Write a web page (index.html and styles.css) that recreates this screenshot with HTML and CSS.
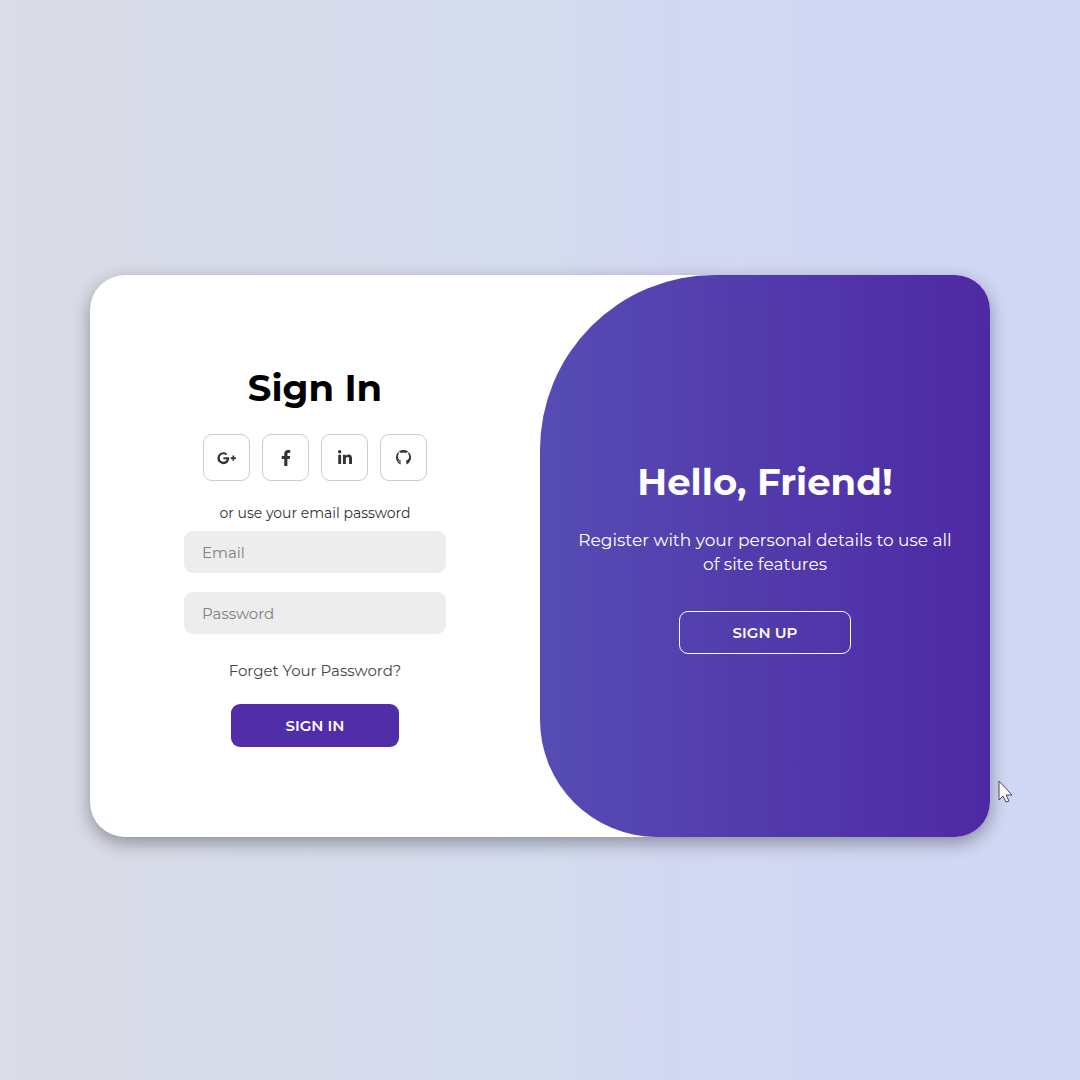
FILE: index.html
```html
<!DOCTYPE html>
<html lang="en">
<head>
    <meta charset="UTF-8">
    <meta name="viewport" content="width=device-width, initial-scale=1.0">
    <title>Sign In</title>
    <link rel="stylesheet" href="styles.css">
</head>
<body>
    <main class="container">
        <form class="sign-in">
            <h1>Sign In</h1>
            <div class="social-icons">
                <a href="#" class="icon" aria-label="Google Plus">
                    <svg width="20" height="16" viewBox="0 0 640 512"><path d="M386 228c2 11 3 22 3 36 0 110-74 188-185 188a192 192 0 1 1 0-384c52 0 95 19 129 50l-53 51c-14-14-39-30-76-30-65 0-118 54-118 120s53 120 118 120c75 0 103-54 108-82H204v-69h182zm164 6v-56h-55v56h-56v56h56v56h55v-56h56v-56h-56z"/></svg>
                </a>
                <a href="#" class="icon" aria-label="Facebook">
                    <svg width="10" height="16" viewBox="0 0 320 512"><path d="M279 288l14-93h-89v-60c0-25 12-50 52-50h41V7s-37-7-72-7c-73 0-121 44-121 125v70H23v93h81v224h100V288z"/></svg>
                </a>
                <a href="#" class="icon" aria-label="LinkedIn">
                    <svg width="14" height="16" viewBox="0 0 448 512"><path d="M100 448H7V149h93v299zM54 108a54 54 0 1 1 0-108 54 54 0 0 1 0 108zM448 448h-93V302c0-34-1-79-48-79-49 0-56 38-56 77v148h-93V149h89v41h1c13-24 43-48 88-48 94 0 112 62 112 142v164z"/></svg>
                </a>
                <a href="#" class="icon" aria-label="GitHub">
                    <svg width="15" height="15" viewBox="0 0 16 16"><path d="M5 15.400A8 8 0 1 1 11 15.400V13c0-.7-.2-1.200-.5-1.600 2.200-.5 3.500-1.800 3.500-4.200 0-1.100-.3-1.900-.9-2.600.2-.8.200-1.600-.1-2.400-.9 0-1.800.5-2.500 1a8 8 0 0 0-5 0c-.7-.5-1.600-1-2.500-1-.3.800-.3 1.600-.1 2.400-.6.700-.9 1.500-.9 2.600 0 2.400 1.300 3.700 3.500 4.200-.2.200-.4.600-.5 1-1.100.3-1.600-.4-2-1-.3-.4-.7-.6-1.200-.5.900.5 1.100 2.700 3.200 2.400z"/></svg>
                </a>
            </div>
            <span class="hint">or use your email password</span>
            <input type="email" placeholder="Email" aria-label="Email">
            <input type="password" placeholder="Password" aria-label="Password">
            <a href="#" class="forgot">Forget Your Password?</a>
            <button type="submit" class="btn">Sign In</button>
        </form>

        <section class="toggle-panel">
            <h1>Hello, Friend!</h1>
            <p>Register with your personal details to use all of site features</p>
            <button type="button" class="btn btn-outline">Sign Up</button>
        </section>

        <svg class="cursor" width="15" height="23" viewBox="0 0 15 23" aria-hidden="true"><path d="M1 1v19l4-4 3 6 3-1-3-6h6z"/></svg>
    </main>
</body>
</html>
```

FILE: styles.css
```css
* {
    margin: 0;
    padding: 0;
    box-sizing: border-box;
    font-family: Montserrat, Inter, sans-serif;
}

body {
    display: flex;
    align-items: center;
    justify-content: center;
    min-height: 100vh;
    padding: 32px 90px 0;
    background: linear-gradient(to right, #dadce6, #d4dcee 50%, #d3d8f2 62%, #d0d7f5);
}

.container {
    position: relative;
    display: grid;
    grid-template-columns: 1fr 1fr;
    width: 100%;
    max-width: 900px;
    min-height: 562px;
    background: #fff;
    border-radius: 35px;
    box-shadow: 0 6px 18px rgba(0, 0, 0, 0.35);
}

.sign-in,
.toggle-panel {
    display: flex;
    flex-direction: column;
    align-items: center;
    justify-content: center;
    text-align: center;
}

.sign-in {
    padding: 0 32px;
}

h1 {
    font-size: 37px;
    line-height: 46px;
    font-weight: 700;
}

.social-icons {
    display: flex;
    gap: 12px;
    margin: 23px 0;
}

.icon {
    display: flex;
    align-items: center;
    justify-content: center;
    width: 47px;
    height: 47px;
    border: 1px solid #ccc;
    border-radius: 9px;
}

.icon svg {
    fill: #333;
}

.hint {
    margin-bottom: 9px;
    font-size: 14px;
    line-height: 18px;
    color: #333;
}

.sign-in input {
    width: 100%;
    max-width: 262px;
    height: 42px;
    margin-bottom: 19px;
    padding: 0 18px;
    border: none;
    border-radius: 9px;
    outline: none;
    background: #ededed;
    font-size: 15px;
}

.sign-in input::placeholder {
    color: #808080;
}

.forgot {
    margin: 8px 0 23px;
    font-size: 15px;
    line-height: 20px;
    color: #444;
    text-decoration: none;
}

.btn {
    height: 43px;
    padding: 0 53px;
    border: 1px solid transparent;
    border-radius: 9px;
    background: #512da8;
    color: #fff;
    font-size: 15px;
    font-weight: 600;
    text-transform: uppercase;
    cursor: pointer;
}

.toggle-panel {
    padding: 0 35px;
    border-radius: 175px 35px 35px 117px;
    background: linear-gradient(to right, #564cb4, #4e29a3);
    color: #fff;
}

.toggle-panel p {
    margin: 23px 0 35px;
    font-size: 17px;
    line-height: 24px;
}

.btn-outline {
    border-color: #fff;
    background: transparent;
}

/* pointer resting over the page, next to the card */
.cursor {
    position: absolute;
    right: -23px;
    bottom: 34px;
    fill: #fff;
    stroke: #445;
}
```
